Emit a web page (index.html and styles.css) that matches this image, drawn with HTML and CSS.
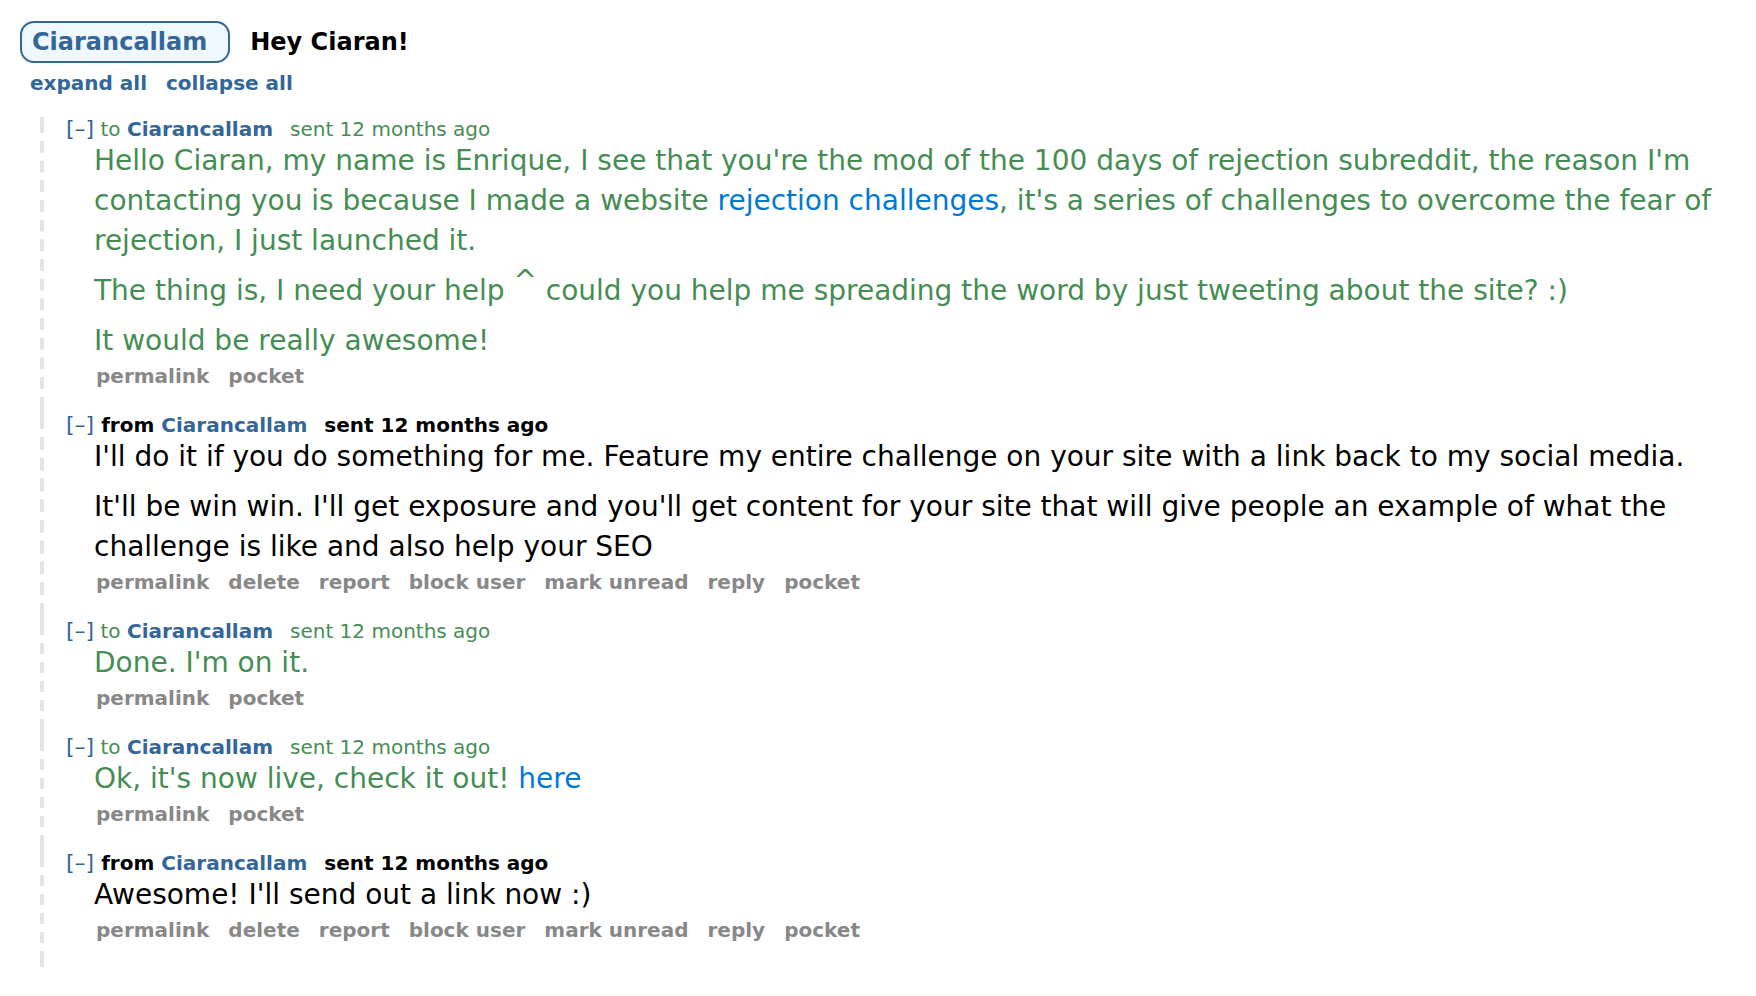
FILE: index.html
```
<!DOCTYPE html>
<html lang="en">
<head>
<meta charset="utf-8">
<title>messages: Hey Ciaran!</title>
<link rel="stylesheet" href="styles.css">
</head>
<body>
<main>
<header class="subject"><a class="correspondent" href="#">Ciarancallam</a><h1>Hey Ciaran!</h1></header>
<nav class="toggles"><a href="#">expand all</a><a href="#">collapse all</a></nav>
<section class="thread">
<article class="message sent">
<p class="tagline"><a class="fold" href="#">[–]</a> to <a class="author" href="#">Ciarancallam</a><span class="time">sent 12 months ago</span></p>
<div class="body">
<p>Hello Ciaran, my name is Enrique, I see that you're the mod of the 100 days of rejection subreddit, the reason I'm contacting you is because I made a website <a href="#">rejection challenges</a>, it's a series of challenges to overcome the fear of rejection, I just launched it.</p>
<p>The thing is, I need your help <sup>^</sup> could you help me spreading the word by just tweeting about the site? :)</p>
<p>It would be really awesome!</p>
</div>
<div class="actions"><a href="#">permalink</a><a href="#">pocket</a></div>
</article>
<article class="message">
<p class="tagline"><a class="fold" href="#">[–]</a> from <a class="author" href="#">Ciarancallam</a><span class="time">sent 12 months ago</span></p>
<div class="body">
<p>I'll do it if you do something for me. Feature my entire challenge on your site with a link back to my social media.</p>
<p>It'll be win win. I'll get exposure and you'll get content for your site that will give people an example of what the challenge is like and also help your SEO</p>
</div>
<div class="actions"><a href="#">permalink</a><a href="#">delete</a><a href="#">report</a><a href="#">block user</a><a href="#">mark unread</a><a href="#">reply</a><a href="#">pocket</a></div>
</article>
<article class="message sent">
<p class="tagline"><a class="fold" href="#">[–]</a> to <a class="author" href="#">Ciarancallam</a><span class="time">sent 12 months ago</span></p>
<div class="body"><p>Done. I'm on it.</p></div>
<div class="actions"><a href="#">permalink</a><a href="#">pocket</a></div>
</article>
<article class="message sent">
<p class="tagline"><a class="fold" href="#">[–]</a> to <a class="author" href="#">Ciarancallam</a><span class="time">sent 12 months ago</span></p>
<div class="body"><p>Ok, it's now live, check it out! <a href="#">here</a></p></div>
<div class="actions"><a href="#">permalink</a><a href="#">pocket</a></div>
</article>
<article class="message">
<p class="tagline"><a class="fold" href="#">[–]</a> from <a class="author" href="#">Ciarancallam</a><span class="time">sent 12 months ago</span></p>
<div class="body"><p>Awesome! I'll send out a link now :)</p></div>
<div class="actions"><a href="#">permalink</a><a href="#">delete</a><a href="#">report</a><a href="#">block user</a><a href="#">mark unread</a><a href="#">reply</a><a href="#">pocket</a></div>
</article>
</section>
</main>
</body>
</html>
```

FILE: styles.css
```
body { margin: 0; background: #fff; color: #000; font-family: Verdana, "DejaVu Sans", sans-serif; }
main { padding: 21px 20px 0; }
a { text-decoration: none; color: #369; }
p, h1 { margin: 0; }
.subject { display: flex; align-items: center; gap: 20px; }
.correspondent { box-sizing: border-box; height: 42px; padding: 0 21px 0 10px; border: 2px solid #369; border-radius: 14px; background: #eff7ff; font-size: 24px; line-height: 38px; font-weight: bold; }
.subject h1 { font-size: 24px; line-height: 38px; }
.toggles { display: flex; gap: 19px; padding: 9px 10px 0; font-size: 20px; line-height: 22px; font-weight: bold; }
.thread { margin: 23px 0 0 20px; }
.message { display: grid; grid-template-columns: 4px 1fr; }
/* Dashed rail beside each message, with a longer dash at both ends */
.message::before {
  content: "";
  grid-column: 1;
  grid-row: 1 / span 3;
  border: solid #e4e4e4;
  border-width: 16px 0;
  padding: 4px 0;
  background: linear-gradient(transparent 20%, #e4e4e4 20% 80%, transparent 80%) 0 0 / 4px 20px repeat-x content-box;
  background-repeat: no-repeat round;
}
.message > * { grid-column: 2; }
.tagline { padding-left: 22px; font-size: 20px; line-height: 24px; font-weight: bold; }
.fold { font-size: 22px; font-weight: normal; }
.author { font-weight: bold; }
.time { margin-left: 17px; }
.sent { color: #468d54; }
.sent .tagline { font-weight: normal; }
.body { padding-left: 50px; font-size: 28px; line-height: 40px; }
.body p + p { margin-top: 10px; }
.body a { color: #0079d3; }
.body sup { font-size: 28px; line-height: 0; }
.actions { display: flex; gap: 19px; padding: 0 0 21px 52px; font-size: 20px; line-height: 31px; font-weight: bold; }
.actions a { color: #888; }
```
